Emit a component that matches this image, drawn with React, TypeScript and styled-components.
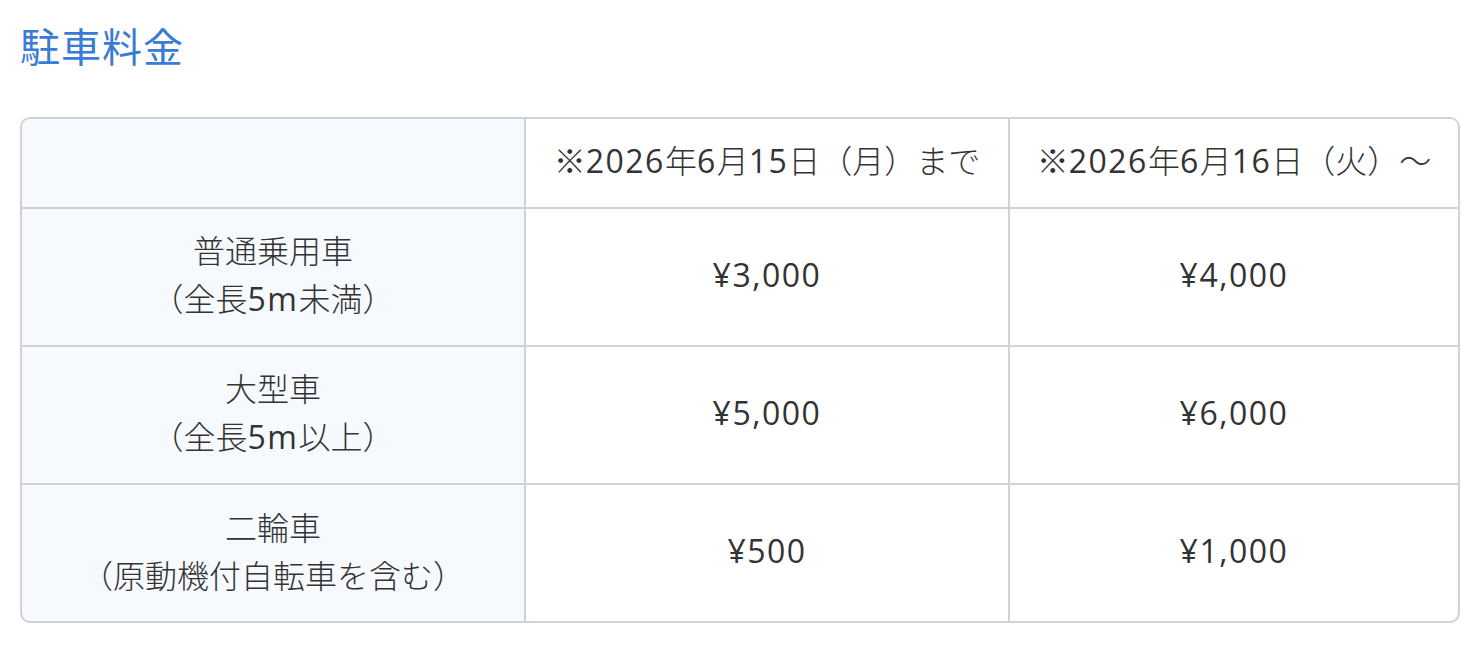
import React from "react";
import styled, { createGlobalStyle } from "styled-components";

const GlobalStyle = createGlobalStyle`
  html, body {
    margin: 0;
    padding: 0;
    background: #ffffff;
  }
  body {
    font-family: "Noto Sans CJK JP", sans-serif;
    color: #333333;
  }
`;

const Page = styled.div`
  padding: 15px 18px 0 20px;
`;

const Title = styled.h2`
  margin: 0 0 42px 0;
  font-family: "Noto Sans CJK JP", sans-serif;
  font-size: 40px;
  line-height: 60px;
  font-weight: 400;
  letter-spacing: 1px;
  color: #3a7bd5;
`;

const Table = styled.div`
  display: grid;
  grid-template-columns: 502px 482px 448px;
  grid-template-rows: 88px repeat(3, 136px);
  gap: 2px;
  width: 1440px;
  box-sizing: border-box;
  border: 2px solid #d0d2d5;
  border-radius: 10px;
  background: #d0d2d5;
  overflow: hidden;
`;

const Cell = styled.div<{ $label?: boolean }>`
  display: flex;
  align-items: center;
  justify-content: center;
  flex-direction: column;
  padding: 0 10px 6px;
  background: ${(p) => (p.$label ? "#f6fafe" : "#ffffff")};
  font-family: "Noto Sans CJK JP", sans-serif;
  font-size: 32px;
  font-weight: 300;
  line-height: 48px;
  text-align: center;
  color: #333333;
`;

const Line = styled.span`
  display: block;
  white-space: nowrap;
`;

const Latin = styled.span`
  font-family: "Open Sans", "DejaVu Sans", sans-serif;
  font-weight: 380;
  letter-spacing: 1.5px;
  color: #333333;
`;

function Text({ children }: { children: string }) {
  const parts = children.split(/([0-9¥,m]+)/).filter((p) => p.length > 0);
  return (
    <>
      {parts.map((p, i) =>
        /^[0-9¥,m]+$/.test(p) ? <Latin key={i}>{p}</Latin> : <React.Fragment key={i}>{p}</React.Fragment>
      )}
    </>
  );
}

const rows = [
  { label: ["普通乗用車", "（全長5m未満）"], a: "¥3,000", b: "¥4,000" },
  { label: ["大型車", "（全長5m以上）"], a: "¥5,000", b: "¥6,000" },
  { label: ["二輪車", "（原動機付自転車を含む）"], a: "¥500", b: "¥1,000" },
];

const heads = ["※2026年6月15日（月）まで", "※2026年6月16日（火）～"];

export default function App() {
  return (
    <Page>
      <GlobalStyle />
      <Title>駐車料金</Title>
      <Table role="table">
        <Cell $label role="columnheader" />
        {heads.map((h) => (
          <Cell key={h} role="columnheader">
            <Line>
              <Text>{h}</Text>
            </Line>
          </Cell>
        ))}
        {rows.map((r) => (
          <React.Fragment key={r.a}>
            <Cell $label role="rowheader">
              {r.label.map((l) => (
                <Line key={l}>
                  <Text>{l}</Text>
                </Line>
              ))}
            </Cell>
            <Cell role="cell">
              <Line>
                <Text>{r.a}</Text>
              </Line>
            </Cell>
            <Cell role="cell">
              <Line>
                <Text>{r.b}</Text>
              </Line>
            </Cell>
          </React.Fragment>
        ))}
      </Table>
    </Page>
  );
}
